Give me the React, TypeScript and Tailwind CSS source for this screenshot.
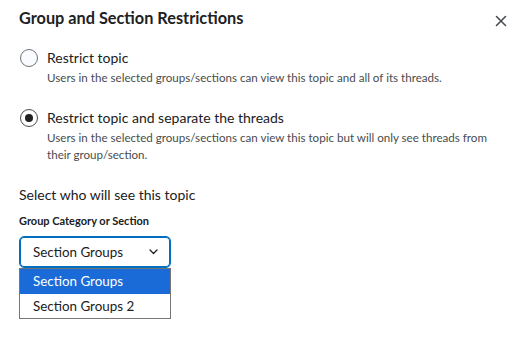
import React from "react";

export default function App() {
  return (
    <div className="relative w-[520px] h-[354px] bg-white text-[#202122]" style={{ fontFamily: "Lato, 'Noto Sans', sans-serif" }}>
      <div className="flex items-start justify-between pl-[19px] pr-[13px] pt-[7px]">
        <h1 className="text-[16.3px] font-bold leading-[22px] text-[#202122]">Group and Section Restrictions</h1>
        <button className="mt-[8px] text-[#494c4e]">
          <svg width="12" height="12" viewBox="0 0 12 12">
            <path d="M1.5 1.5 L10.5 10.5 M10.5 1.5 L1.5 10.5" stroke="#494c4e" strokeWidth="1.6" strokeLinecap="round" />
          </svg>
        </button>
      </div>

      <div className="pl-[20px] pt-[19px] flex flex-col">
        <div className="flex items-start gap-[9px]">
          <span className="mt-[1px] w-[18px] h-[18px] rounded-full border border-[#6e7376] bg-[#f9fbff] shrink-0" />
          <div className="flex flex-col">
            <span className="text-[14px] leading-[20px]">Restrict topic</span>
            <span className="text-[11.6px] leading-[17px] text-[#494c4e] mt-[1px]">Users in the selected groups/sections can view this topic and all of its threads.</span>
          </div>
        </div>

        <div className="flex items-start gap-[9px] mt-[22px]">
          <span className="mt-[1px] w-[18px] h-[18px] rounded-full border border-[#494c4e] bg-white shrink-0 flex items-center justify-center">
            <span className="w-[8px] h-[8px] rounded-full bg-[#202122]" />
          </span>
          <div className="flex flex-col w-[450px]">
            <span className="text-[14px] leading-[20px]">Restrict topic and separate the threads</span>
            <span className="text-[11.6px] leading-[17px] text-[#494c4e] mt-[1px] pr-[4px]">Users in the selected groups/sections can view this topic but will only see threads from their group/section.</span>
          </div>
        </div>
      </div>

      <div className="pl-[19px] mt-[22px] flex flex-col">
        <span className="text-[14px] leading-[20px]">Select who will see this topic</span>
        <span className="text-[11px] font-bold leading-[16px] mt-[8px]">Group Category or Section</span>
        <div className="mt-[7px] w-[152px]">
          <div className="h-[32px] border border-[#006fbf] rounded-[5px] flex items-center justify-between pl-[13px] pr-[12px] shadow-[inset_0_0_0_1px_#006fbf]">
            <span className="text-[13.4px]">Section Groups</span>
            <svg width="9" height="6" viewBox="0 0 9 6">
              <path d="M1 1 L4.5 4.5 L8 1" stroke="#202122" strokeWidth="1.3" fill="none" strokeLinecap="round" strokeLinejoin="round" />
            </svg>
          </div>
          <div className="border border-[#767676] flex flex-col">
            <div className="h-[25px] bg-[#1a6bd8] text-white text-[13.4px] flex items-center pl-[13px]">Section Groups</div>
            <div className="h-[24px] text-[13.4px] flex items-center pl-[13px]">Section Groups 2</div>
          </div>
        </div>
      </div>
    </div>
  );
}
